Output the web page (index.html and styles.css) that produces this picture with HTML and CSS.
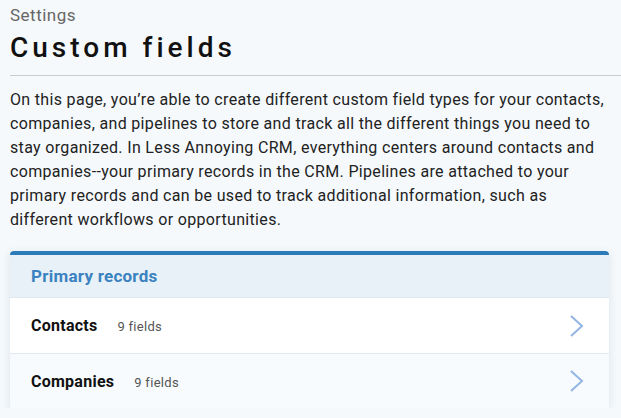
FILE: index.html
```html
<!DOCTYPE html>
<html>
<head>
<meta charset="utf-8">
<link rel="stylesheet" href="styles.css">
</head>
<body>
<div class="page">
  <header class="head">
    <div class="crumb">Settings</div>
    <h1 class="title">Custom fields</h1>
  </header>
  <p class="intro">On this page, you’re able to create different custom field types for your contacts, companies, and pipelines to store and track all the different things you need to stay organized. In Less Annoying CRM, everything centers around contacts and companies--your primary records in the CRM. Pipelines are attached to your primary records and can be used to track additional information, such as different workflows or opportunities.</p>
  <section class="card">
    <div class="card-head">Primary records</div>
    <div class="row">
      <span class="row-name">Contacts</span>
      <span class="row-count">9 fields</span>
      <svg class="chev" width="16" height="24" viewBox="0 0 16 24"><path d="M2 2 L13 12 L2 22" fill="none" stroke="#93b5e2" stroke-width="2"/></svg>
    </div>
    <div class="row alt">
      <span class="row-name">Companies</span>
      <span class="row-count">9 fields</span>
      <svg class="chev" width="16" height="24" viewBox="0 0 16 24"><path d="M2 2 L13 12 L2 22" fill="none" stroke="#93b5e2" stroke-width="2"/></svg>
    </div>
  </section>
</div>
</body>
</html>
```
FILE: styles.css
```css
html, body { margin: 0; padding: 0; }
body {
  background: #f5f9fc;
  font-family: Roboto, "Liberation Sans", sans-serif;
  color: #222;
}
.page { padding: 4px 0 0 10px; }
.head { border-bottom: 1px solid #c8ccd1; padding-bottom: 10px; }
.crumb { font-size: 17px; color: #666; line-height: 22px; letter-spacing: 0.5px; }
.title {
  margin: 5px 0 0;
  font-size: 28px;
  font-weight: 500;
  letter-spacing: 4px;
  color: #111;
  line-height: 34px;
}
.intro {
  margin: 12px 10px 0 0;
  font-size: 16px;
  line-height: 24px;
  color: #222;
  letter-spacing: 0.33px;
}
.card {
  margin: 19px 12px 0 0;
  border-top: 4px solid #2b7bb9;
  border-radius: 4px 4px 0 0;
  background: #fff;
  box-shadow: 0 2px 8px rgba(40, 70, 100, 0.12);
}
.card-head {
  background: #e8f1f8;
  color: #3a82c0;
  font-weight: 700;
  font-size: 17px;
  letter-spacing: 0.25px;
  height: 42px;
  display: flex;
  align-items: center;
  padding-left: 21px;
  border-bottom: 1px solid #e2e8ee;
}
.row {
  display: flex;
  align-items: center;
  height: 55px;
  padding: 0 24px 0 21px;
  background: #fff;
}
.row + .row { border-top: 1px solid #e2e8ee; height: 54px; }
.row.alt { background: #f7fbfe; }
.row-name { font-size: 16px; font-weight: 700; color: #111; letter-spacing: 0.25px; }
.row-count { font-size: 13px; color: #555; margin-left: 20px; margin-top: 2px; letter-spacing: 0.3px; }
.chev { margin-left: auto; }
```
